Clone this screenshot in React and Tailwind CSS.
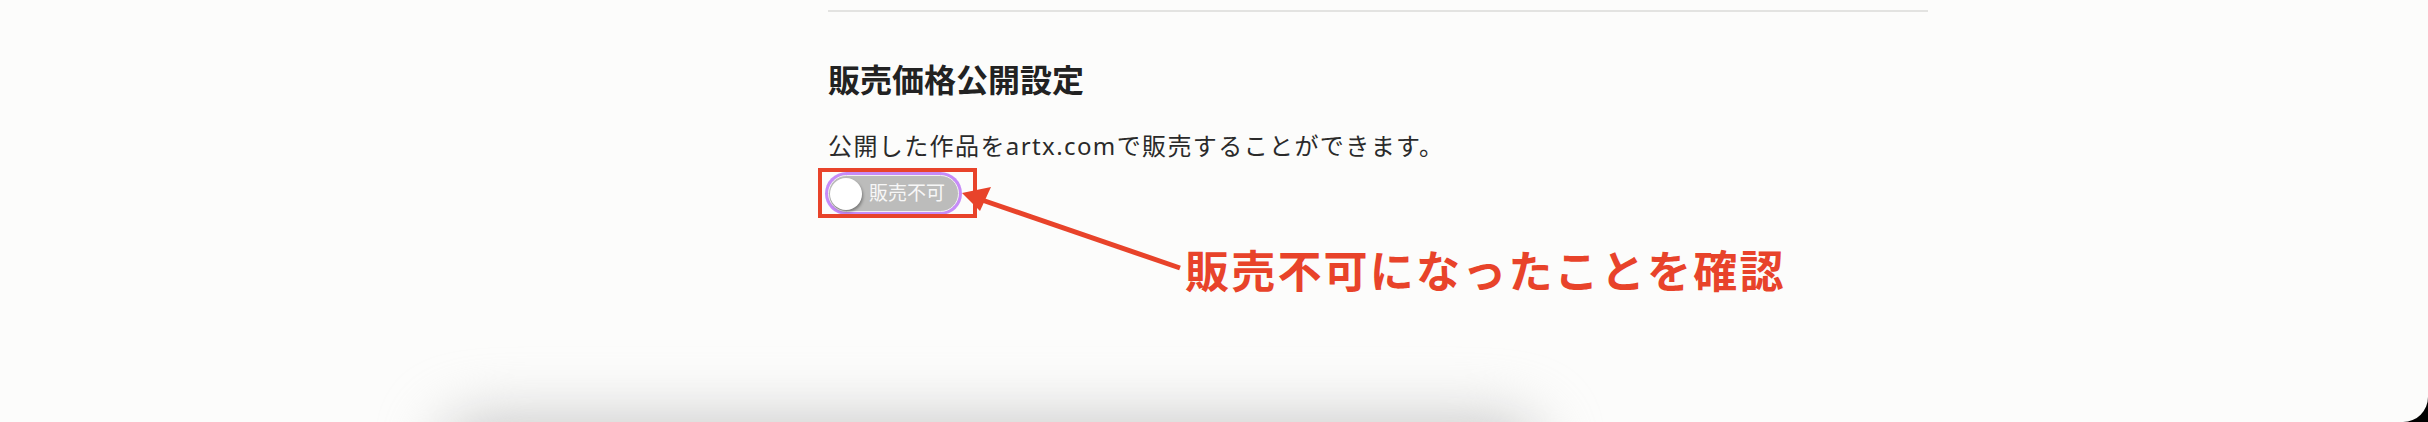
const jp = '"Noto Sans", "Noto Sans CJK JP", sans-serif';

function SaleToggle() {
  return (
    <div className="flex h-[37px] w-[131px] items-center rounded-full border border-[#f2f2f2] bg-[#bcbcbb] pl-[1px] ring-[3px] ring-[#c68cf7]">
      <span className="h-[32px] w-[32px] shrink-0 rounded-full bg-white shadow-[1px_2px_3px_rgba(0,0,0,0.35)]" />
      <span className="ml-[7px] whitespace-nowrap text-[19px] leading-none text-[#f7f7f7]">
        販売不可
      </span>
    </div>
  );
}

export default function App() {
  return (
    <div className="h-[422px] w-full overflow-hidden bg-black" style={{ fontFamily: jp }}>
      <div className="relative h-[422px] w-full overflow-hidden rounded-br-[25px] bg-[#fcfcfb]">
        <section className="ml-[828px] flex w-[1100px] flex-col pt-[10px]">
          <div className="h-[2px] w-full bg-[#e3e3e1]" />

          <h2 className="mt-[48px] text-[32px] font-bold leading-[40px] text-[#222222]">
            販売価格公開設定
          </h2>

          <p className="mt-[30px] text-[24px] leading-[32px] tracking-[1.4px] text-[#2a2a2a]">
            公開した作品をartx.comで販売することができます。
          </p>

          <div className="mt-[13px]">
            <SaleToggle />
          </div>
        </section>

        {/* annotation */}
        <div className="absolute left-[818px] top-[168px] h-[50px] w-[159px] border-4 border-[#e8432a]" />
        <svg
          className="pointer-events-none absolute left-0 top-0"
          width="2428"
          height="422"
          viewBox="0 0 2428 422"
        >
          <line x1="1180" y1="268" x2="982" y2="200" stroke="#e8432a" strokeWidth="5" />
          <polygon points="962,193 991,187 980,211" fill="#e8432a" />
        </svg>
        <p className="absolute left-[1185px] top-[244px] whitespace-nowrap text-[44px] font-bold leading-[54px] tracking-[2.2px] text-[#e8432a]">
          販売不可になったことを確認
        </p>

        <div className="absolute left-[440px] top-[418px] h-[80px] w-[1100px] rounded-[40px] bg-[#c8c8c8] blur-[30px]" />
      </div>
    </div>
  );
}
